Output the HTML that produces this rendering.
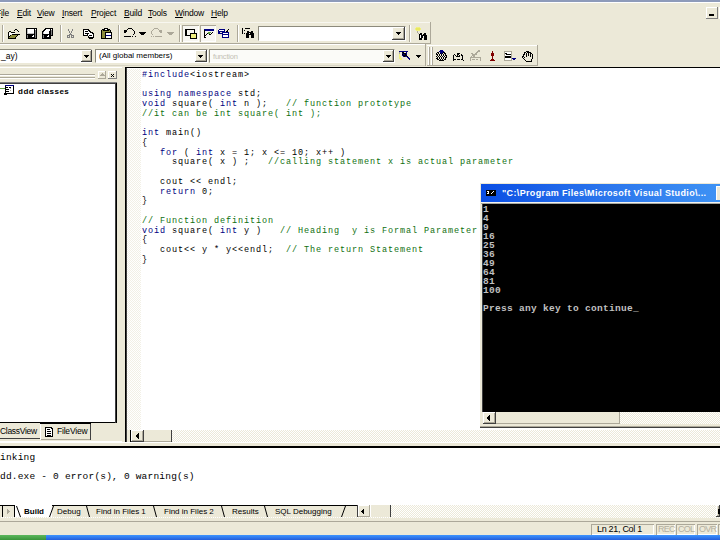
<!DOCTYPE html>
<html><head><meta charset="utf-8">
<style>
html,body{margin:0;padding:0;}
body{width:720px;height:540px;overflow:hidden;position:relative;background:#ece9d8;font-family:"Liberation Sans",sans-serif;}
.a{position:absolute;}
.dith{background-color:#ece9d8;background-image:linear-gradient(45deg,#fff 25%,transparent 25%,transparent 75%,#fff 75%),linear-gradient(45deg,#fff 25%,transparent 25%,transparent 75%,#fff 75%);background-size:2px 2px;background-position:0 0,1px 1px;}
.menu{font-size:8.5px;letter-spacing:-0.2px;color:#000;top:8px;white-space:pre;}
.menu u{text-decoration:underline;}
.code{font-family:"Liberation Mono",monospace;font-size:8.5px;letter-spacing:0.9px;font-weight:normal;line-height:9.75px;white-space:pre;color:#000;}
.kw{color:#000080;}
.cm{color:#107010;}
.con{font-family:"Liberation Mono",monospace;font-size:9.5px;letter-spacing:0.3px;font-weight:bold;line-height:9px;white-space:pre;color:#c0c0c0;}
.sunk{background:#fff;border-top:1px solid #8c8a7c;border-left:1px solid #8c8a7c;border-right:1px solid #fff;border-bottom:1px solid #fff;box-sizing:border-box;}
.sunk2{background:#fff;box-shadow:inset 1px 1px 0 #808080,inset 2px 2px 0 #404040,inset -1px -1px 0 #fff,inset -2px -2px 0 #d4d0c8;box-sizing:border-box;}
.btn{background:#ece9d8;box-shadow:inset -1px -1px 0 #404040,inset 1px 1px 0 #fff,inset -2px -2px 0 #aca899;box-sizing:border-box;}
.sepv{width:1px;background:#aca899;box-shadow:1px 0 0 #fff;}
.tab{font-size:8px;color:#000;white-space:pre;}
.stat{font-size:9.5px;white-space:pre;}
</style></head><body>
<!-- top strip -->
<div class="a" style="left:0;top:0;width:720px;height:2px;background:#8e9bba"></div>
<div class="a" style="left:0;top:2px;width:720px;height:1px;background:#fff"></div>
<!-- menu -->
<div class="a menu" style="left:-4px">F<u>i</u>le</div>
<div class="a menu" style="left:17px"><u>E</u>dit</div>
<div class="a menu" style="left:37px"><u>V</u>iew</div>
<div class="a menu" style="left:62px"><u>I</u>nsert</div>
<div class="a menu" style="left:91px"><u>P</u>roject</div>
<div class="a menu" style="left:124px"><u>B</u>uild</div>
<div class="a menu" style="left:148px"><u>T</u>ools</div>
<div class="a menu" style="left:175px"><u>W</u>indow</div>
<div class="a menu" style="left:211px"><u>H</u>elp</div>
<!-- MDI min button -->
<div class="a" style="left:706px;top:7px;width:12px;height:12px;box-shadow:inset -1px -1px 0 #808080,inset 1px 1px 0 #fff"></div>
<div class="a" style="left:709px;top:14px;width:5px;height:2px;background:#000"></div>
<div class="a" style="left:719px;top:7px;width:1px;height:12px;background:#fff"></div>

<!-- toolbar 1 -->
<div class="a" style="left:0;top:22px;width:430px;height:1px;background:#f8f7f0"></div>
<div class="a" style="left:0;top:43px;width:430px;height:1px;background:#aca899"></div>
<div class="a" style="left:430px;top:22px;width:1px;height:22px;background:#aca899"></div>
<div class="a sepv" style="left:2px;top:25px;height:17px"></div>
<div class="a sepv" style="left:60px;top:25px;height:17px"></div>
<div class="a sepv" style="left:118px;top:25px;height:17px"></div>
<div class="a sepv" style="left:179px;top:25px;height:17px"></div>
<div class="a sepv" style="left:237px;top:25px;height:17px"></div>
<div class="a sepv" style="left:409px;top:25px;height:17px"></div>
<!-- pressed buttons -->
<div class="a" style="left:182px;top:25px;width:17px;height:17px;background:#f7f6f1;box-shadow:inset 1px 1px 0 #aca899,inset -1px -1px 0 #fff"></div>
<div class="a" style="left:200px;top:25px;width:16px;height:17px;background:#f7f6f1;box-shadow:inset 1px 1px 0 #aca899,inset -1px -1px 0 #fff"></div>
<!-- find combo -->
<div class="a sunk" style="left:258px;top:26px;width:148px;height:15px"></div>
<div class="a btn" style="left:392px;top:27px;width:13px;height:13px"></div>

<!-- toolbar 2 -->
<div class="a" style="left:0;top:44px;width:425px;height:1px;background:#fff"></div>
<div class="a" style="left:0;top:65px;width:425px;height:1px;background:#d8d4c4"></div>
<div class="a" style="left:425px;top:44px;width:1px;height:22px;background:#aca899"></div>
<div class="a sunk" style="left:-2px;top:49px;width:94px;height:14px"></div>
<div class="a btn" style="left:81px;top:50px;width:11px;height:12px"></div>
<div class="a" style="left:1px;top:51px;font-size:8.5px;white-space:pre">_ay)</div>
<div class="a sunk" style="left:95px;top:49px;width:113px;height:14px"></div>
<div class="a btn" style="left:195px;top:50px;width:12px;height:12px"></div>
<div class="a" style="left:99px;top:51px;font-size:8px;white-space:pre">(All global members)</div>
<div class="a sunk" style="left:209px;top:49px;width:186px;height:14px;background:#fbfbf8"></div>
<div class="a btn" style="left:383px;top:50px;width:11px;height:12px"></div>
<div class="a" style="left:213px;top:51.5px;font-size:7.5px;letter-spacing:-0.2px;color:#c4c1b4;white-space:pre">function</div>
<!-- toolbar 3 -->
<div class="a" style="left:427px;top:45px;width:110px;height:1px;background:#fff"></div>
<div class="a" style="left:427px;top:65px;width:110px;height:1px;background:#aca899"></div>
<div class="a" style="left:537px;top:45px;width:1px;height:21px;background:#aca899"></div>
<div class="a" style="left:428px;top:47px;width:1px;height:18px;background:#fff;box-shadow:1px 0 0 #aca899"></div>
<div class="a" style="left:431px;top:47px;width:1px;height:18px;background:#fff;box-shadow:1px 0 0 #aca899"></div>


<!-- left pane -->
<div class="a" style="left:0;top:67px;width:122px;height:1px;background:#fff"></div>
<div class="a" style="left:0;top:74px;width:95px;height:1px;background:#aca899;box-shadow:0 1px 0 #fff"></div>
<div class="a" style="left:0;top:77px;width:95px;height:1px;background:#aca899;box-shadow:0 1px 0 #fff"></div>
<div class="a" style="left:98px;top:71px;width:8px;height:8px;box-shadow:inset -1px -1px 0 #aca899,inset 1px 1px 0 #fff"></div>
<div class="a" style="left:108px;top:71px;width:9px;height:8px;box-shadow:inset -1px -1px 0 #808080,inset 1px 1px 0 #fff"></div>
<div class="a" style="left:0;top:82px;width:117px;height:341px;background:#fff;box-shadow:inset 0 1px 0 #808080,inset -1px 0 0 #000,inset -2px 0 0 #404040,inset 0 -1px 0 #000,inset 0 2px 0 #404040"></div>
<div class="a" style="left:18px;top:86.5px;font-size:8px;font-weight:bold;letter-spacing:0.5px;white-space:pre">ddd classes</div>
<!-- left tabs -->
<div class="a" style="left:0;top:423px;width:40px;height:16px;box-shadow:inset 0 -1px 0 #404040"></div>
<div class="a tab" style="left:0;top:426px;font-size:8.5px;letter-spacing:-0.3px">ClassView</div>
<div class="a" style="left:40px;top:423px;width:51px;height:17px;background:#ece9d8;box-shadow:inset 0 1px 0 #000,inset -1px 0 0 #404040,inset 1px 0 0 #fff,inset 0 -1px 0 #aca899"></div>
<div class="a tab" style="left:57px;top:426px;font-size:8.5px;letter-spacing:-0.2px">FileView</div>
<div class="a" style="left:0;top:441px;width:122px;height:1px;background:#fff"></div>

<!-- editor -->
<div class="a" style="left:125px;top:67px;width:595px;height:375px;background:#fff;box-shadow:inset 1px 1px 0 #000,inset 2px 0 0 #404040"></div>
<div class="a dith" style="left:127px;top:69px;width:14px;height:361px;background-color:#f2f0e6"></div>
<div class="a dith" style="left:127px;top:430px;width:593px;height:12px"></div>
<div class="a" style="left:127px;top:430px;width:3px;height:12px;background:#ece9d8"></div>
<div class="a" style="left:130px;top:430px;width:1px;height:12px;background:#000"></div>
<div class="a btn" style="left:131px;top:430px;width:13px;height:12px"></div>
<div class="a" style="left:144px;top:430px;width:28px;height:12px;background:#ece9d8;box-shadow:inset -1px 0 0 #404040,inset 0 -1px 0 #aca899"></div>
<div class="a" style="left:0;top:442px;width:720px;height:1px;background:#fff"></div>

<div class="a code" style="left:142px;top:70.5px"><span class="kw">#include</span>&lt;iostream&gt;

<span class="kw">using namespace</span> std;
<span class="kw">void</span> square( <span class="kw">int</span> n );   <span class="cm">// function prototype</span>
<span class="cm">//it can be int square( int );</span>

<span class="kw">int</span> main()
{
   <span class="kw">for</span> ( <span class="kw">int</span> x = 1; x &lt;= 10; x++ )
     square( x ) ;   <span class="cm">//calling statement x is actual parameter</span>

   cout &lt;&lt; endl;
   <span class="kw">return</span> 0;
}

<span class="cm">// Function definition</span>
<span class="kw">void</span> square( <span class="kw">int</span> y )   <span class="cm">// Heading  y is Formal Parameter</span>
{
   cout&lt;&lt; y * y&lt;&lt;endl;  <span class="cm">// The return Statement</span>
}
</div>

<!-- console window -->
<div class="a" style="left:479px;top:182px;width:241px;height:246px;background:#ece9d8;box-shadow:inset 1px 1px 0 #fff,inset 0 -1px 0 #404040,inset 0 -2px 0 #aca899"></div>
<div class="a" style="left:481px;top:184px;width:239px;height:18px;background:linear-gradient(90deg,#0a4ee4 0%,#2a74ec 50%,#3e92f4 100%)"></div>
<div class="a" style="left:481px;top:202px;width:239px;height:1px;background:#f4f4f0"></div>
<div class="a" style="left:481px;top:203px;width:239px;height:1px;background:#a8a8a0"></div>
<div class="a" style="left:482px;top:204px;width:238px;height:208px;background:#000;box-shadow:inset 1px 0 0 #404040"></div>
<div class="a" style="left:502px;top:188px;font-size:9px;letter-spacing:0.35px;font-weight:bold;color:#fff;white-space:pre">"C:\Program Files\Microsoft Visual Studio\...</div>
<div class="a" style="left:716px;top:186px;width:4px;height:14px;background:#ece9d8;box-shadow:inset 1px 1px 0 #fff"></div>
<div class="a con" style="left:483px;top:205px">1
4
9
16
25
36
49
64
81
100

Press any key to continue_</div>
<div class="a dith" style="left:483px;top:412px;width:237px;height:12px"></div>
<div class="a btn" style="left:483px;top:412px;width:13px;height:12px"></div>
<div class="a" style="left:496px;top:412px;width:124px;height:12px;background:#ece9d8;box-shadow:inset -1px -1px 0 #aca899"></div>

<!-- output pane -->
<div class="a" style="left:0;top:446px;width:720px;height:2px;background:#000"></div>
<div class="a" style="left:0;top:448px;width:720px;height:57px;background:#fff"></div>
<div class="a code" style="left:0;top:453px;color:#000;font-weight:normal;font-size:9.5px;letter-spacing:0.2px;line-height:9.5px">inking

dd.exe - 0 error(s), 0 warning(s)</div>
<div class="a dith" style="left:0;top:505px;width:720px;height:13px"></div>
<div class="a" style="left:0;top:518px;width:720px;height:3px;background:#ece9d8"></div>
<div class="a" style="left:0;top:521px;width:720px;height:1px;background:#aca899"></div>

<!-- output tabs -->
<div class="a" style="left:15px;top:505px;width:343px;height:12px;background:#ece9d8;box-shadow:inset 0 1px 0 #000"></div>
<div class="a" style="left:15px;top:505px;width:37px;height:12px;background:#fff"></div>
<div class="a" style="left:0;top:505px;width:15px;height:12px;background:#ece9d8;box-shadow:inset 0 1px 0 #000"></div>
<div class="a" style="left:2px;top:505px;width:1px;height:12px;background:#000"></div>
<div class="a" style="left:14px;top:505px;width:1px;height:12px;background:#000"></div>
<svg class="a" style="left:0;top:0" width="720" height="540">
<g stroke="#000" stroke-width="1" fill="none">
<path d="M16.5 506 L20.5 517"/>
<path d="M53.5 506 L49.5 517"/>
<path d="M86.5 506 L89.5 517"/>
<path d="M153.5 506 L156.5 517"/>
<path d="M221.5 506 L224.5 517"/>
<path d="M264.5 506 L267.5 517"/>
<path d="M345.5 506 L341.5 517"/>
</g>
</svg>
<div class="a" style="left:357px;top:505px;width:1px;height:12px;background:#404040"></div>
<div class="a" style="left:358px;top:505px;width:12px;height:12px;background:#ece9d8;box-shadow:inset -1px -1px 0 #aca899,inset 1px 1px 0 #fff"></div>
<div class="a" style="left:370px;top:505px;width:21px;height:12px;background:#ece9d8;box-shadow:inset -1px 0 0 #404040,inset 1px 0 0 #fff"></div>
<div class="a btn" style="left:716px;top:505px;width:4px;height:12px"></div>
<div class="a tab" style="left:24px;top:507px;font-weight:bold">Build</div>
<div class="a tab" style="left:57px;top:507px">Debug</div>
<div class="a tab" style="left:96px;top:507px">Find in Files 1</div>
<div class="a tab" style="left:164px;top:507px">Find in Files 2</div>
<div class="a tab" style="left:232px;top:507px">Results</div>
<div class="a tab" style="left:275px;top:507px">SQL Debugging</div>

<!-- status -->
<div class="a" style="left:591px;top:524px;width:63px;height:11px;box-shadow:inset 1px 1px 0 #aca899,inset -1px -1px 0 #fff"></div>
<div class="a stat" style="left:597px;top:524px;font-size:9px;letter-spacing:-0.3px">Ln 21, Col 1</div>
<div class="a" style="left:656px;top:524px;width:19px;height:11px;box-shadow:inset 1px 1px 0 #aca899,inset -1px -1px 0 #fff"></div>
<div class="a stat" style="left:658px;top:524px;font-size:9px;letter-spacing:-0.7px;color:#b4b0a0">REC</div>
<div class="a" style="left:676px;top:524px;width:19px;height:11px;box-shadow:inset 1px 1px 0 #aca899,inset -1px -1px 0 #fff"></div>
<div class="a stat" style="left:678px;top:524px;font-size:9px;letter-spacing:-0.7px;color:#b4b0a0">COL</div>
<div class="a" style="left:697px;top:524px;width:20px;height:11px;box-shadow:inset 1px 1px 0 #aca899,inset -1px -1px 0 #fff"></div>
<div class="a stat" style="left:699px;top:524px;font-size:9px;letter-spacing:-0.7px;color:#b4b0a0">OVR</div>
<div class="a" style="left:718px;top:524px;width:2px;height:11px;box-shadow:inset 1px 1px 0 #aca899"></div>
<!-- taskbar -->
<div class="a" style="left:0;top:535px;width:720px;height:5px;background:linear-gradient(180deg,#3d95ff,#245edb)"></div>
<div class="a" style="left:0;top:535px;width:46px;height:5px;background:linear-gradient(180deg,#5cb85c,#3a943a)"></div>






<!--ICONS-->
<svg class="a" style="left:0;top:0" width="720" height="540" shape-rendering="crispEdges">
<rect x="15" y="29" width="2" height="1" fill="#000000"/>
<rect x="14" y="30" width="1" height="1" fill="#000000"/>
<rect x="17" y="30" width="1" height="1" fill="#000000"/>
<rect x="9" y="31" width="2" height="1" fill="#000000"/>
<rect x="18" y="31" width="1" height="1" fill="#000000"/>
<rect x="8" y="32" width="1" height="1" fill="#000000"/>
<rect x="11" y="32" width="4" height="1" fill="#000000"/>
<rect x="8" y="33" width="1" height="1" fill="#000000"/>
<rect x="9" y="33" width="6" height="1" fill="#ffffff"/>
<rect x="8" y="34" width="1" height="1" fill="#000000"/>
<rect x="9" y="34" width="2" height="1" fill="#ffffff"/>
<rect x="12" y="34" width="8" height="1" fill="#000000"/>
<rect x="8" y="35" width="1" height="1" fill="#000000"/>
<rect x="9" y="35" width="1" height="1" fill="#ffffff"/>
<rect x="10" y="35" width="1" height="1" fill="#000000"/>
<rect x="11" y="35" width="6" height="1" fill="#8c8c3c"/>
<rect x="17" y="35" width="1" height="1" fill="#000000"/>
<rect x="8" y="36" width="2" height="1" fill="#000000"/>
<rect x="10" y="36" width="6" height="1" fill="#8c8c3c"/>
<rect x="16" y="36" width="1" height="1" fill="#000000"/>
<rect x="8" y="37" width="1" height="1" fill="#000000"/>
<rect x="9" y="37" width="6" height="1" fill="#8c8c3c"/>
<rect x="15" y="37" width="1" height="1" fill="#000000"/>
<rect x="8" y="38" width="8" height="1" fill="#000000"/>
<rect x="26" y="28" width="11" height="1" fill="#000000"/>
<rect x="26" y="29" width="1" height="1" fill="#000000"/>
<rect x="27" y="29" width="1" height="1" fill="#c0c0c0"/>
<rect x="28" y="29" width="6" height="1" fill="#ffffff"/>
<rect x="34" y="29" width="1" height="1" fill="#000000"/>
<rect x="35" y="29" width="1" height="1" fill="#ffffff"/>
<rect x="36" y="29" width="1" height="1" fill="#000000"/>
<rect x="26" y="30" width="1" height="1" fill="#000000"/>
<rect x="27" y="30" width="1" height="1" fill="#c0c0c0"/>
<rect x="28" y="30" width="6" height="1" fill="#ffffff"/>
<rect x="34" y="30" width="1" height="1" fill="#000000"/>
<rect x="35" y="30" width="1" height="1" fill="#808080"/>
<rect x="36" y="30" width="1" height="1" fill="#000000"/>
<rect x="26" y="31" width="1" height="1" fill="#000000"/>
<rect x="27" y="31" width="1" height="1" fill="#c0c0c0"/>
<rect x="28" y="31" width="6" height="1" fill="#ffffff"/>
<rect x="34" y="31" width="1" height="1" fill="#000000"/>
<rect x="35" y="31" width="1" height="1" fill="#808080"/>
<rect x="36" y="31" width="1" height="1" fill="#000000"/>
<rect x="26" y="32" width="1" height="1" fill="#000000"/>
<rect x="27" y="32" width="1" height="1" fill="#c0c0c0"/>
<rect x="28" y="32" width="6" height="1" fill="#ffffff"/>
<rect x="34" y="32" width="1" height="1" fill="#000000"/>
<rect x="35" y="32" width="1" height="1" fill="#808080"/>
<rect x="36" y="32" width="1" height="1" fill="#000000"/>
<rect x="26" y="33" width="1" height="1" fill="#000000"/>
<rect x="27" y="33" width="7" height="1" fill="#c0c0c0"/>
<rect x="34" y="33" width="1" height="1" fill="#000000"/>
<rect x="35" y="33" width="1" height="1" fill="#808080"/>
<rect x="36" y="33" width="1" height="1" fill="#000000"/>
<rect x="26" y="34" width="9" height="1" fill="#000000"/>
<rect x="35" y="34" width="1" height="1" fill="#808080"/>
<rect x="36" y="34" width="1" height="1" fill="#000000"/>
<rect x="26" y="35" width="1" height="1" fill="#000000"/>
<rect x="27" y="35" width="1" height="1" fill="#808080"/>
<rect x="28" y="35" width="5" height="1" fill="#000000"/>
<rect x="33" y="35" width="1" height="1" fill="#ffffff"/>
<rect x="34" y="35" width="1" height="1" fill="#000000"/>
<rect x="35" y="35" width="1" height="1" fill="#808080"/>
<rect x="36" y="35" width="1" height="1" fill="#000000"/>
<rect x="26" y="36" width="1" height="1" fill="#000000"/>
<rect x="27" y="36" width="1" height="1" fill="#808080"/>
<rect x="28" y="36" width="4" height="1" fill="#000000"/>
<rect x="32" y="36" width="2" height="1" fill="#ffffff"/>
<rect x="34" y="36" width="1" height="1" fill="#000000"/>
<rect x="35" y="36" width="1" height="1" fill="#808080"/>
<rect x="36" y="36" width="1" height="1" fill="#000000"/>
<rect x="26" y="37" width="1" height="1" fill="#000000"/>
<rect x="27" y="37" width="1" height="1" fill="#808080"/>
<rect x="28" y="37" width="7" height="1" fill="#000000"/>
<rect x="35" y="37" width="1" height="1" fill="#808080"/>
<rect x="36" y="37" width="1" height="1" fill="#000000"/>
<rect x="26" y="38" width="11" height="1" fill="#000000"/>
<rect x="45" y="28" width="8" height="1" fill="#000000"/>
<rect x="44" y="29" width="2" height="1" fill="#000000"/>
<rect x="46" y="29" width="4" height="1" fill="#ffffff"/>
<rect x="50" y="29" width="1" height="1" fill="#000000"/>
<rect x="51" y="29" width="1" height="1" fill="#ffffff"/>
<rect x="52" y="29" width="1" height="1" fill="#000000"/>
<rect x="43" y="30" width="2" height="1" fill="#000000"/>
<rect x="45" y="30" width="5" height="1" fill="#ffffff"/>
<rect x="50" y="30" width="1" height="1" fill="#000000"/>
<rect x="51" y="30" width="1" height="1" fill="#808080"/>
<rect x="52" y="30" width="1" height="1" fill="#000000"/>
<rect x="42" y="31" width="2" height="1" fill="#000000"/>
<rect x="44" y="31" width="5" height="1" fill="#ffffff"/>
<rect x="49" y="31" width="2" height="1" fill="#000000"/>
<rect x="51" y="31" width="1" height="1" fill="#808080"/>
<rect x="52" y="31" width="1" height="1" fill="#000000"/>
<rect x="42" y="32" width="1" height="1" fill="#000000"/>
<rect x="43" y="32" width="1" height="1" fill="#c0c0c0"/>
<rect x="44" y="32" width="5" height="1" fill="#ffffff"/>
<rect x="49" y="32" width="2" height="1" fill="#000000"/>
<rect x="51" y="32" width="1" height="1" fill="#808080"/>
<rect x="52" y="32" width="1" height="1" fill="#000000"/>
<rect x="42" y="33" width="1" height="1" fill="#000000"/>
<rect x="43" y="33" width="1" height="1" fill="#c0c0c0"/>
<rect x="44" y="33" width="5" height="1" fill="#ffffff"/>
<rect x="49" y="33" width="2" height="1" fill="#000000"/>
<rect x="51" y="33" width="1" height="1" fill="#808080"/>
<rect x="52" y="33" width="1" height="1" fill="#000000"/>
<rect x="42" y="34" width="9" height="1" fill="#000000"/>
<rect x="51" y="34" width="1" height="1" fill="#808080"/>
<rect x="52" y="34" width="1" height="1" fill="#000000"/>
<rect x="42" y="35" width="1" height="1" fill="#000000"/>
<rect x="43" y="35" width="1" height="1" fill="#808080"/>
<rect x="44" y="35" width="4" height="1" fill="#000000"/>
<rect x="48" y="35" width="1" height="1" fill="#ffffff"/>
<rect x="49" y="35" width="4" height="1" fill="#000000"/>
<rect x="42" y="36" width="1" height="1" fill="#000000"/>
<rect x="43" y="36" width="1" height="1" fill="#808080"/>
<rect x="44" y="36" width="3" height="1" fill="#000000"/>
<rect x="47" y="36" width="2" height="1" fill="#ffffff"/>
<rect x="49" y="36" width="2" height="1" fill="#000000"/>
<rect x="42" y="37" width="1" height="1" fill="#000000"/>
<rect x="43" y="37" width="1" height="1" fill="#808080"/>
<rect x="44" y="37" width="7" height="1" fill="#000000"/>
<rect x="42" y="38" width="9" height="1" fill="#000000"/>
<rect x="68" y="29" width="1" height="1" fill="#808080"/>
<rect x="72" y="29" width="1" height="1" fill="#808080"/>
<rect x="68" y="30" width="1" height="1" fill="#808080"/>
<rect x="72" y="30" width="1" height="1" fill="#808080"/>
<rect x="69" y="31" width="1" height="1" fill="#808080"/>
<rect x="71" y="31" width="1" height="1" fill="#808080"/>
<rect x="69" y="32" width="1" height="1" fill="#808080"/>
<rect x="71" y="32" width="1" height="1" fill="#808080"/>
<rect x="70" y="33" width="1" height="1" fill="#808080"/>
<rect x="69" y="34" width="3" height="1" fill="#808080"/>
<rect x="67" y="35" width="3" height="1" fill="#808080"/>
<rect x="71" y="35" width="3" height="1" fill="#808080"/>
<rect x="67" y="36" width="1" height="1" fill="#808080"/>
<rect x="69" y="36" width="1" height="1" fill="#808080"/>
<rect x="71" y="36" width="1" height="1" fill="#808080"/>
<rect x="73" y="36" width="1" height="1" fill="#808080"/>
<rect x="67" y="37" width="3" height="1" fill="#808080"/>
<rect x="71" y="37" width="3" height="1" fill="#808080"/>
<rect x="83" y="29" width="6" height="1" fill="#000000"/>
<rect x="83" y="30" width="1" height="1" fill="#000000"/>
<rect x="84" y="30" width="4" height="1" fill="#ffffff"/>
<rect x="88" y="30" width="2" height="1" fill="#000000"/>
<rect x="83" y="31" width="1" height="1" fill="#000000"/>
<rect x="84" y="31" width="1" height="1" fill="#ffffff"/>
<rect x="85" y="31" width="3" height="1" fill="#000000"/>
<rect x="88" y="31" width="1" height="1" fill="#ffffff"/>
<rect x="89" y="31" width="2" height="1" fill="#000000"/>
<rect x="83" y="32" width="1" height="1" fill="#000000"/>
<rect x="84" y="32" width="6" height="1" fill="#ffffff"/>
<rect x="90" y="32" width="3" height="1" fill="#000000"/>
<rect x="83" y="33" width="1" height="1" fill="#000000"/>
<rect x="84" y="33" width="1" height="1" fill="#ffffff"/>
<rect x="85" y="33" width="4" height="1" fill="#000000"/>
<rect x="89" y="33" width="3" height="1" fill="#ffffff"/>
<rect x="92" y="33" width="2" height="1" fill="#000000"/>
<rect x="83" y="34" width="1" height="1" fill="#000000"/>
<rect x="84" y="34" width="3" height="1" fill="#ffffff"/>
<rect x="87" y="34" width="1" height="1" fill="#000000"/>
<rect x="88" y="34" width="5" height="1" fill="#ffffff"/>
<rect x="93" y="34" width="1" height="1" fill="#000000"/>
<rect x="83" y="35" width="5" height="1" fill="#000000"/>
<rect x="88" y="35" width="1" height="1" fill="#ffffff"/>
<rect x="89" y="35" width="3" height="1" fill="#000000"/>
<rect x="92" y="35" width="1" height="1" fill="#ffffff"/>
<rect x="93" y="35" width="1" height="1" fill="#000000"/>
<rect x="88" y="36" width="1" height="1" fill="#000000"/>
<rect x="89" y="36" width="4" height="1" fill="#ffffff"/>
<rect x="93" y="36" width="1" height="1" fill="#000000"/>
<rect x="88" y="37" width="6" height="1" fill="#000000"/>
<rect x="89" y="38" width="4" height="1" fill="#000000"/>
<rect x="104" y="28" width="4" height="1" fill="#000000"/>
<rect x="102" y="29" width="3" height="1" fill="#000000"/>
<rect x="105" y="29" width="2" height="1" fill="#ffffff"/>
<rect x="107" y="29" width="3" height="1" fill="#000000"/>
<rect x="101" y="30" width="1" height="1" fill="#000000"/>
<rect x="102" y="30" width="1" height="1" fill="#8c8c3c"/>
<rect x="103" y="30" width="6" height="1" fill="#000000"/>
<rect x="109" y="30" width="1" height="1" fill="#8c8c3c"/>
<rect x="110" y="30" width="1" height="1" fill="#000000"/>
<rect x="101" y="31" width="1" height="1" fill="#000000"/>
<rect x="102" y="31" width="8" height="1" fill="#8c8c3c"/>
<rect x="110" y="31" width="1" height="1" fill="#000000"/>
<rect x="101" y="32" width="1" height="1" fill="#000000"/>
<rect x="102" y="32" width="3" height="1" fill="#8c8c3c"/>
<rect x="105" y="32" width="7" height="1" fill="#000000"/>
<rect x="101" y="33" width="1" height="1" fill="#000000"/>
<rect x="102" y="33" width="3" height="1" fill="#8c8c3c"/>
<rect x="105" y="33" width="1" height="1" fill="#000000"/>
<rect x="106" y="33" width="5" height="1" fill="#ffffff"/>
<rect x="111" y="33" width="1" height="1" fill="#000000"/>
<rect x="101" y="34" width="1" height="1" fill="#000000"/>
<rect x="102" y="34" width="3" height="1" fill="#8c8c3c"/>
<rect x="105" y="34" width="1" height="1" fill="#000000"/>
<rect x="106" y="34" width="5" height="1" fill="#ffffff"/>
<rect x="111" y="34" width="1" height="1" fill="#000000"/>
<rect x="101" y="35" width="1" height="1" fill="#000000"/>
<rect x="102" y="35" width="3" height="1" fill="#8c8c3c"/>
<rect x="105" y="35" width="1" height="1" fill="#000000"/>
<rect x="106" y="35" width="5" height="1" fill="#000080"/>
<rect x="111" y="35" width="1" height="1" fill="#000000"/>
<rect x="101" y="36" width="1" height="1" fill="#000000"/>
<rect x="102" y="36" width="3" height="1" fill="#8c8c3c"/>
<rect x="105" y="36" width="1" height="1" fill="#000000"/>
<rect x="106" y="36" width="5" height="1" fill="#ffffff"/>
<rect x="111" y="36" width="1" height="1" fill="#000000"/>
<rect x="101" y="37" width="1" height="1" fill="#000000"/>
<rect x="102" y="37" width="3" height="1" fill="#8c8c3c"/>
<rect x="105" y="37" width="1" height="1" fill="#000000"/>
<rect x="106" y="37" width="5" height="1" fill="#ffffff"/>
<rect x="111" y="37" width="1" height="1" fill="#000000"/>
<rect x="101" y="38" width="11" height="1" fill="#000000"/>
<rect x="128" y="28" width="4" height="1" fill="#000000"/>
<rect x="127" y="29" width="1" height="1" fill="#000000"/>
<rect x="132" y="29" width="1" height="1" fill="#000000"/>
<rect x="124" y="30" width="3" height="1" fill="#000000"/>
<rect x="133" y="30" width="1" height="1" fill="#000000"/>
<rect x="124" y="31" width="3" height="1" fill="#000000"/>
<rect x="134" y="31" width="1" height="1" fill="#000000"/>
<rect x="124" y="32" width="2" height="1" fill="#000000"/>
<rect x="134" y="32" width="1" height="1" fill="#000000"/>
<rect x="134" y="33" width="1" height="1" fill="#000000"/>
<rect x="133" y="34" width="1" height="1" fill="#000000"/>
<rect x="124" y="36" width="7" height="1" fill="#000000"/>
<rect x="132" y="36" width="1" height="1" fill="#000000"/>
<rect x="135" y="36" width="1" height="1" fill="#000000"/>
<rect x="139" y="32" width="7" height="1" fill="#000000"/>
<rect x="140" y="33" width="5" height="1" fill="#000000"/>
<rect x="141" y="34" width="3" height="1" fill="#000000"/>
<rect x="154" y="28" width="4" height="1" fill="#aca899"/>
<rect x="153" y="29" width="1" height="1" fill="#aca899"/>
<rect x="158" y="29" width="1" height="1" fill="#aca899"/>
<rect x="152" y="30" width="1" height="1" fill="#aca899"/>
<rect x="159" y="30" width="3" height="1" fill="#aca899"/>
<rect x="151" y="31" width="1" height="1" fill="#aca899"/>
<rect x="159" y="31" width="3" height="1" fill="#aca899"/>
<rect x="151" y="32" width="1" height="1" fill="#aca899"/>
<rect x="160" y="32" width="2" height="1" fill="#aca899"/>
<rect x="151" y="33" width="1" height="1" fill="#aca899"/>
<rect x="152" y="34" width="1" height="1" fill="#aca899"/>
<rect x="151" y="36" width="1" height="1" fill="#aca899"/>
<rect x="153" y="36" width="1" height="1" fill="#aca899"/>
<rect x="155" y="36" width="7" height="1" fill="#aca899"/>
<rect x="167" y="32" width="7" height="1" fill="#aca899"/>
<rect x="168" y="33" width="5" height="1" fill="#aca899"/>
<rect x="169" y="34" width="3" height="1" fill="#aca899"/>
<rect x="185" y="29" width="10" height="1" fill="#000000"/>
<rect x="185" y="30" width="2" height="1" fill="#000000"/>
<rect x="194" y="30" width="1" height="1" fill="#000000"/>
<rect x="185" y="31" width="2" height="1" fill="#000000"/>
<rect x="194" y="31" width="1" height="1" fill="#000000"/>
<rect x="185" y="32" width="2" height="1" fill="#000000"/>
<rect x="194" y="32" width="1" height="1" fill="#000000"/>
<rect x="185" y="33" width="2" height="1" fill="#000000"/>
<rect x="190" y="33" width="7" height="1" fill="#000000"/>
<rect x="185" y="34" width="2" height="1" fill="#000000"/>
<rect x="190" y="34" width="1" height="1" fill="#000000"/>
<rect x="191" y="34" width="5" height="1" fill="#f0f080"/>
<rect x="196" y="34" width="1" height="1" fill="#000000"/>
<rect x="185" y="35" width="6" height="1" fill="#000000"/>
<rect x="191" y="35" width="5" height="1" fill="#f0f080"/>
<rect x="196" y="35" width="1" height="1" fill="#000000"/>
<rect x="190" y="36" width="1" height="1" fill="#000000"/>
<rect x="191" y="36" width="5" height="1" fill="#f0f080"/>
<rect x="196" y="36" width="1" height="1" fill="#000000"/>
<rect x="190" y="37" width="1" height="1" fill="#000000"/>
<rect x="191" y="37" width="5" height="1" fill="#f0f080"/>
<rect x="196" y="37" width="1" height="1" fill="#000000"/>
<rect x="190" y="38" width="7" height="1" fill="#000000"/>
<rect x="204" y="29" width="10" height="1" fill="#000080"/>
<rect x="204" y="30" width="1" height="1" fill="#000000"/>
<rect x="205" y="30" width="9" height="1" fill="#000080"/>
<rect x="204" y="31" width="1" height="1" fill="#000000"/>
<rect x="204" y="32" width="1" height="1" fill="#000000"/>
<rect x="208" y="32" width="3" height="1" fill="#60a040"/>
<rect x="212" y="32" width="1" height="1" fill="#000000"/>
<rect x="204" y="33" width="1" height="1" fill="#000000"/>
<rect x="207" y="33" width="1" height="1" fill="#000000"/>
<rect x="208" y="33" width="2" height="1" fill="#60a040"/>
<rect x="211" y="33" width="1" height="1" fill="#000000"/>
<rect x="204" y="34" width="1" height="1" fill="#000000"/>
<rect x="206" y="34" width="1" height="1" fill="#000000"/>
<rect x="209" y="34" width="2" height="1" fill="#000000"/>
<rect x="204" y="35" width="2" height="1" fill="#000000"/>
<rect x="204" y="36" width="1" height="1" fill="#000000"/>
<rect x="204" y="37" width="2" height="1" fill="#000000"/>
<rect x="219" y="29" width="6" height="1" fill="#000080"/>
<rect x="228" y="29" width="1" height="1" fill="#000000"/>
<rect x="218" y="30" width="1" height="1" fill="#000080"/>
<rect x="219" y="30" width="5" height="1" fill="#ffffff"/>
<rect x="224" y="30" width="1" height="1" fill="#000080"/>
<rect x="227" y="30" width="1" height="1" fill="#000000"/>
<rect x="218" y="31" width="7" height="1" fill="#000080"/>
<rect x="226" y="31" width="2" height="1" fill="#000000"/>
<rect x="218" y="32" width="2" height="1" fill="#000080"/>
<rect x="222" y="32" width="7" height="1" fill="#000080"/>
<rect x="218" y="33" width="5" height="1" fill="#000080"/>
<rect x="223" y="33" width="5" height="1" fill="#ffffff"/>
<rect x="228" y="33" width="1" height="1" fill="#000080"/>
<rect x="222" y="34" width="7" height="1" fill="#000080"/>
<rect x="222" y="35" width="1" height="1" fill="#000080"/>
<rect x="223" y="35" width="5" height="1" fill="#ffffff"/>
<rect x="228" y="35" width="1" height="1" fill="#000080"/>
<rect x="222" y="36" width="1" height="1" fill="#000080"/>
<rect x="223" y="36" width="5" height="1" fill="#ffffff"/>
<rect x="228" y="36" width="1" height="1" fill="#000080"/>
<rect x="222" y="37" width="7" height="1" fill="#000080"/>
<rect x="242" y="28" width="1" height="1" fill="#000000"/>
<rect x="245" y="28" width="5" height="1" fill="#000000"/>
<rect x="242" y="29" width="1" height="1" fill="#000000"/>
<rect x="242" y="30" width="1" height="1" fill="#000000"/>
<rect x="244" y="30" width="1" height="1" fill="#000000"/>
<rect x="242" y="31" width="1" height="1" fill="#000000"/>
<rect x="247" y="31" width="2" height="1" fill="#000000"/>
<rect x="251" y="31" width="2" height="1" fill="#000000"/>
<rect x="242" y="32" width="1" height="1" fill="#000000"/>
<rect x="247" y="32" width="6" height="1" fill="#000000"/>
<rect x="242" y="33" width="1" height="1" fill="#000000"/>
<rect x="244" y="33" width="1" height="1" fill="#000000"/>
<rect x="246" y="33" width="3" height="1" fill="#000000"/>
<rect x="249" y="33" width="1" height="1" fill="#ffffff"/>
<rect x="250" y="33" width="4" height="1" fill="#000000"/>
<rect x="246" y="34" width="8" height="1" fill="#000000"/>
<rect x="246" y="35" width="3" height="1" fill="#000000"/>
<rect x="251" y="35" width="3" height="1" fill="#000000"/>
<rect x="246" y="36" width="3" height="1" fill="#000000"/>
<rect x="251" y="36" width="3" height="1" fill="#000000"/>
<rect x="246" y="37" width="3" height="1" fill="#000000"/>
<rect x="251" y="37" width="3" height="1" fill="#000000"/>
<rect x="416" y="27" width="4" height="1" fill="#f0f080"/>
<rect x="415" y="28" width="1" height="1" fill="#f0f080"/>
<rect x="416" y="28" width="4" height="1" fill="#e8e860"/>
<rect x="420" y="28" width="1" height="1" fill="#f0f080"/>
<rect x="415" y="29" width="1" height="1" fill="#f0f080"/>
<rect x="416" y="29" width="4" height="1" fill="#e8e860"/>
<rect x="420" y="29" width="1" height="1" fill="#f0f080"/>
<rect x="416" y="30" width="4" height="1" fill="#f0f080"/>
<rect x="417" y="31" width="1" height="1" fill="#aca899"/>
<rect x="417" y="32" width="1" height="1" fill="#aca899"/>
<rect x="418" y="33" width="1" height="1" fill="#aca899"/>
<rect x="420" y="33" width="2" height="1" fill="#000000"/>
<rect x="424" y="33" width="2" height="1" fill="#000000"/>
<rect x="419" y="34" width="3" height="1" fill="#000000"/>
<rect x="423" y="34" width="3" height="1" fill="#000000"/>
<rect x="419" y="35" width="1" height="1" fill="#000000"/>
<rect x="420" y="35" width="1" height="1" fill="#ffffff"/>
<rect x="421" y="35" width="6" height="1" fill="#000000"/>
<rect x="419" y="36" width="1" height="1" fill="#000000"/>
<rect x="420" y="36" width="1" height="1" fill="#ffffff"/>
<rect x="421" y="36" width="2" height="1" fill="#000000"/>
<rect x="423" y="36" width="1" height="1" fill="#ffffff"/>
<rect x="424" y="36" width="3" height="1" fill="#000000"/>
<rect x="419" y="37" width="1" height="1" fill="#000000"/>
<rect x="420" y="37" width="1" height="1" fill="#ffffff"/>
<rect x="421" y="37" width="2" height="1" fill="#000000"/>
<rect x="424" y="37" width="3" height="1" fill="#000000"/>
<rect x="419" y="38" width="3" height="1" fill="#000000"/>
<rect x="424" y="38" width="3" height="1" fill="#000000"/>
<rect x="419" y="39" width="3" height="1" fill="#000000"/>
<rect x="424" y="39" width="3" height="1" fill="#000000"/>
<rect x="396" y="32" width="5" height="1" fill="#000000"/>
<rect x="397" y="33" width="3" height="1" fill="#000000"/>
<rect x="398" y="34" width="1" height="1" fill="#000000"/>
<rect x="84" y="55" width="5" height="1" fill="#000000"/>
<rect x="85" y="56" width="3" height="1" fill="#000000"/>
<rect x="86" y="57" width="1" height="1" fill="#000000"/>
<rect x="198" y="55" width="5" height="1" fill="#000000"/>
<rect x="199" y="56" width="3" height="1" fill="#000000"/>
<rect x="200" y="57" width="1" height="1" fill="#000000"/>
<rect x="386" y="55" width="5" height="1" fill="#000000"/>
<rect x="387" y="56" width="3" height="1" fill="#000000"/>
<rect x="388" y="57" width="1" height="1" fill="#000000"/>
<rect x="416" y="55" width="5" height="1" fill="#000000"/>
<rect x="417" y="56" width="3" height="1" fill="#000000"/>
<rect x="418" y="57" width="1" height="1" fill="#000000"/>
<rect x="399" y="51" width="9" height="1" fill="#000080"/>
<rect x="399" y="52" width="1" height="1" fill="#aca899"/>
<rect x="402" y="52" width="2" height="1" fill="#000000"/>
<rect x="406" y="52" width="1" height="1" fill="#000080"/>
<rect x="399" y="53" width="1" height="1" fill="#aca899"/>
<rect x="402" y="53" width="1" height="1" fill="#000080"/>
<rect x="403" y="53" width="3" height="1" fill="#000000"/>
<rect x="406" y="53" width="1" height="1" fill="#000080"/>
<rect x="399" y="54" width="1" height="1" fill="#f0f080"/>
<rect x="402" y="54" width="1" height="1" fill="#000000"/>
<rect x="403" y="54" width="2" height="1" fill="#000080"/>
<rect x="405" y="54" width="1" height="1" fill="#000000"/>
<rect x="406" y="54" width="1" height="1" fill="#000080"/>
<rect x="399" y="55" width="1" height="1" fill="#f0f080"/>
<rect x="402" y="55" width="1" height="1" fill="#000080"/>
<rect x="403" y="55" width="4" height="1" fill="#000000"/>
<rect x="399" y="56" width="2" height="1" fill="#f0f080"/>
<rect x="403" y="56" width="1" height="1" fill="#000080"/>
<rect x="404" y="56" width="1" height="1" fill="#000000"/>
<rect x="405" y="56" width="2" height="1" fill="#000080"/>
<rect x="407" y="56" width="1" height="1" fill="#000000"/>
<rect x="399" y="57" width="2" height="1" fill="#f0f080"/>
<rect x="407" y="57" width="2" height="1" fill="#000080"/>
<rect x="399" y="58" width="3" height="1" fill="#f0f080"/>
<rect x="408" y="58" width="2" height="1" fill="#000080"/>
<rect x="400" y="59" width="2" height="1" fill="#f0f080"/>
<rect x="409" y="59" width="1" height="1" fill="#000080"/>
<rect x="440" y="50" width="3" height="1" fill="#000080"/>
<rect x="439" y="51" width="5" height="1" fill="#000080"/>
<rect x="437" y="52" width="2" height="1" fill="#000000"/>
<rect x="440" y="52" width="3" height="1" fill="#000080"/>
<rect x="443" y="52" width="2" height="1" fill="#000000"/>
<rect x="436" y="53" width="1" height="1" fill="#000000"/>
<rect x="438" y="53" width="1" height="1" fill="#000000"/>
<rect x="440" y="53" width="1" height="1" fill="#000000"/>
<rect x="441" y="53" width="1" height="1" fill="#000080"/>
<rect x="442" y="53" width="1" height="1" fill="#000000"/>
<rect x="444" y="53" width="2" height="1" fill="#000000"/>
<rect x="436" y="54" width="2" height="1" fill="#000000"/>
<rect x="439" y="54" width="1" height="1" fill="#000000"/>
<rect x="441" y="54" width="1" height="1" fill="#000000"/>
<rect x="443" y="54" width="1" height="1" fill="#000000"/>
<rect x="445" y="54" width="1" height="1" fill="#000000"/>
<rect x="437" y="55" width="1" height="1" fill="#000000"/>
<rect x="439" y="55" width="1" height="1" fill="#000000"/>
<rect x="441" y="55" width="1" height="1" fill="#000000"/>
<rect x="443" y="55" width="1" height="1" fill="#000000"/>
<rect x="445" y="55" width="2" height="1" fill="#000000"/>
<rect x="436" y="56" width="1" height="1" fill="#000000"/>
<rect x="438" y="56" width="1" height="1" fill="#000000"/>
<rect x="440" y="56" width="1" height="1" fill="#000000"/>
<rect x="442" y="56" width="1" height="1" fill="#000000"/>
<rect x="444" y="56" width="1" height="1" fill="#000000"/>
<rect x="446" y="56" width="1" height="1" fill="#000000"/>
<rect x="437" y="57" width="1" height="1" fill="#000000"/>
<rect x="439" y="57" width="1" height="1" fill="#000000"/>
<rect x="441" y="57" width="1" height="1" fill="#000000"/>
<rect x="443" y="57" width="1" height="1" fill="#000000"/>
<rect x="445" y="57" width="2" height="1" fill="#000000"/>
<rect x="436" y="58" width="2" height="1" fill="#000000"/>
<rect x="439" y="58" width="1" height="1" fill="#000000"/>
<rect x="441" y="58" width="1" height="1" fill="#000000"/>
<rect x="443" y="58" width="1" height="1" fill="#000000"/>
<rect x="445" y="58" width="1" height="1" fill="#000000"/>
<rect x="437" y="59" width="2" height="1" fill="#000000"/>
<rect x="440" y="59" width="1" height="1" fill="#000000"/>
<rect x="442" y="59" width="1" height="1" fill="#000000"/>
<rect x="444" y="59" width="2" height="1" fill="#000000"/>
<rect x="439" y="60" width="5" height="1" fill="#000000"/>
<rect x="457" y="53" width="3" height="1" fill="#000000"/>
<rect x="454" y="54" width="1" height="1" fill="#000000"/>
<rect x="457" y="54" width="2" height="1" fill="#000000"/>
<rect x="461" y="54" width="1" height="1" fill="#000000"/>
<rect x="453" y="55" width="1" height="1" fill="#000000"/>
<rect x="455" y="55" width="1" height="1" fill="#000000"/>
<rect x="457" y="55" width="1" height="1" fill="#000000"/>
<rect x="459" y="55" width="1" height="1" fill="#000000"/>
<rect x="461" y="55" width="2" height="1" fill="#000000"/>
<rect x="453" y="56" width="1" height="1" fill="#000000"/>
<rect x="456" y="56" width="4" height="1" fill="#000000"/>
<rect x="462" y="56" width="1" height="1" fill="#000000"/>
<rect x="453" y="57" width="1" height="1" fill="#000000"/>
<rect x="462" y="57" width="1" height="1" fill="#000000"/>
<rect x="453" y="58" width="1" height="1" fill="#000000"/>
<rect x="462" y="58" width="1" height="1" fill="#000000"/>
<rect x="453" y="59" width="3" height="1" fill="#000000"/>
<rect x="457" y="59" width="3" height="1" fill="#000000"/>
<rect x="461" y="59" width="2" height="1" fill="#000000"/>
<rect x="453" y="60" width="1" height="1" fill="#000000"/>
<rect x="463" y="60" width="1" height="1" fill="#000000"/>
<rect x="478" y="50" width="2" height="1" fill="#aca899"/>
<rect x="477" y="51" width="3" height="1" fill="#aca899"/>
<rect x="476" y="52" width="2" height="1" fill="#aca899"/>
<rect x="471" y="53" width="2" height="1" fill="#aca899"/>
<rect x="475" y="53" width="2" height="1" fill="#aca899"/>
<rect x="472" y="54" width="5" height="1" fill="#aca899"/>
<rect x="472" y="55" width="3" height="1" fill="#aca899"/>
<rect x="471" y="56" width="1" height="1" fill="#aca899"/>
<rect x="473" y="56" width="2" height="1" fill="#aca899"/>
<rect x="470" y="57" width="11" height="1" fill="#aca899"/>
<rect x="470" y="58" width="1" height="1" fill="#aca899"/>
<rect x="480" y="58" width="1" height="1" fill="#aca899"/>
<rect x="470" y="59" width="1" height="1" fill="#aca899"/>
<rect x="472" y="59" width="3" height="1" fill="#aca899"/>
<rect x="476" y="59" width="2" height="1" fill="#aca899"/>
<rect x="480" y="59" width="1" height="1" fill="#aca899"/>
<rect x="470" y="60" width="1" height="1" fill="#aca899"/>
<rect x="480" y="60" width="1" height="1" fill="#aca899"/>
<rect x="492" y="51" width="1" height="1" fill="#800000"/>
<rect x="492" y="52" width="1" height="1" fill="#800000"/>
<rect x="491" y="53" width="3" height="1" fill="#800000"/>
<rect x="491" y="54" width="3" height="1" fill="#800000"/>
<rect x="491" y="55" width="3" height="1" fill="#800000"/>
<rect x="492" y="56" width="1" height="1" fill="#800000"/>
<rect x="492" y="57" width="1" height="1" fill="#800000"/>
<rect x="492" y="58" width="1" height="1" fill="#800000"/>
<rect x="491" y="59" width="3" height="1" fill="#800000"/>
<rect x="490" y="60" width="5" height="1" fill="#800000"/>
<rect x="504" y="51" width="8" height="1" fill="#aca899"/>
<rect x="504" y="52" width="1" height="1" fill="#aca899"/>
<rect x="505" y="52" width="6" height="1" fill="#ffffff"/>
<rect x="511" y="52" width="1" height="1" fill="#aca899"/>
<rect x="504" y="53" width="1" height="1" fill="#aca899"/>
<rect x="505" y="53" width="2" height="1" fill="#000000"/>
<rect x="507" y="53" width="4" height="1" fill="#ffffff"/>
<rect x="511" y="53" width="1" height="1" fill="#aca899"/>
<rect x="504" y="54" width="1" height="1" fill="#aca899"/>
<rect x="505" y="54" width="1" height="1" fill="#ffffff"/>
<rect x="506" y="54" width="5" height="1" fill="#000000"/>
<rect x="511" y="54" width="1" height="1" fill="#aca899"/>
<rect x="504" y="55" width="1" height="1" fill="#aca899"/>
<rect x="505" y="55" width="6" height="1" fill="#ffffff"/>
<rect x="511" y="55" width="1" height="1" fill="#aca899"/>
<rect x="504" y="56" width="1" height="1" fill="#aca899"/>
<rect x="505" y="56" width="6" height="1" fill="#000000"/>
<rect x="511" y="56" width="1" height="1" fill="#aca899"/>
<rect x="504" y="57" width="1" height="1" fill="#aca899"/>
<rect x="505" y="57" width="6" height="1" fill="#000000"/>
<rect x="511" y="57" width="1" height="1" fill="#aca899"/>
<rect x="504" y="58" width="1" height="1" fill="#aca899"/>
<rect x="505" y="58" width="6" height="1" fill="#ffffff"/>
<rect x="511" y="58" width="1" height="1" fill="#aca899"/>
<rect x="512" y="58" width="4" height="1" fill="#000080"/>
<rect x="504" y="59" width="1" height="1" fill="#aca899"/>
<rect x="505" y="59" width="6" height="1" fill="#ffffff"/>
<rect x="511" y="59" width="1" height="1" fill="#aca899"/>
<rect x="513" y="59" width="2" height="1" fill="#000080"/>
<rect x="504" y="60" width="8" height="1" fill="#aca899"/>
<rect x="526" y="51" width="3" height="1" fill="#000000"/>
<rect x="524" y="52" width="2" height="1" fill="#000000"/>
<rect x="527" y="52" width="4" height="1" fill="#000000"/>
<rect x="524" y="53" width="1" height="1" fill="#000000"/>
<rect x="526" y="53" width="1" height="1" fill="#000000"/>
<rect x="528" y="53" width="1" height="1" fill="#000000"/>
<rect x="530" y="53" width="2" height="1" fill="#000000"/>
<rect x="523" y="54" width="2" height="1" fill="#000000"/>
<rect x="526" y="54" width="1" height="1" fill="#000000"/>
<rect x="528" y="54" width="1" height="1" fill="#000000"/>
<rect x="530" y="54" width="1" height="1" fill="#000000"/>
<rect x="532" y="54" width="1" height="1" fill="#000000"/>
<rect x="523" y="55" width="1" height="1" fill="#000000"/>
<rect x="526" y="55" width="1" height="1" fill="#000000"/>
<rect x="528" y="55" width="1" height="1" fill="#000000"/>
<rect x="530" y="55" width="1" height="1" fill="#000000"/>
<rect x="532" y="55" width="1" height="1" fill="#000000"/>
<rect x="522" y="56" width="2" height="1" fill="#000000"/>
<rect x="526" y="56" width="1" height="1" fill="#000000"/>
<rect x="530" y="56" width="1" height="1" fill="#000000"/>
<rect x="532" y="56" width="1" height="1" fill="#000000"/>
<rect x="522" y="57" width="1" height="1" fill="#000000"/>
<rect x="524" y="57" width="1" height="1" fill="#000000"/>
<rect x="532" y="57" width="1" height="1" fill="#000000"/>
<rect x="523" y="58" width="1" height="1" fill="#000000"/>
<rect x="532" y="58" width="1" height="1" fill="#000000"/>
<rect x="524" y="59" width="1" height="1" fill="#000000"/>
<rect x="531" y="59" width="1" height="1" fill="#000000"/>
<rect x="525" y="60" width="1" height="1" fill="#000000"/>
<rect x="531" y="60" width="1" height="1" fill="#000000"/>
<rect x="526" y="61" width="6" height="1" fill="#000000"/>
<rect x="5" y="85" width="9" height="1" fill="#000080"/>
<rect x="5" y="86" width="1" height="1" fill="#000000"/>
<rect x="6" y="86" width="7" height="1" fill="#ffffff"/>
<rect x="13" y="86" width="1" height="1" fill="#000000"/>
<rect x="5" y="87" width="3" height="1" fill="#000000"/>
<rect x="8" y="87" width="1" height="1" fill="#ffffff"/>
<rect x="9" y="87" width="2" height="1" fill="#000000"/>
<rect x="11" y="87" width="2" height="1" fill="#ffffff"/>
<rect x="13" y="87" width="1" height="1" fill="#000000"/>
<rect x="0" y="88" width="5" height="1" fill="#60a040"/>
<rect x="5" y="88" width="1" height="1" fill="#000000"/>
<rect x="6" y="88" width="4" height="1" fill="#ffffff"/>
<rect x="10" y="88" width="1" height="1" fill="#aca899"/>
<rect x="11" y="88" width="2" height="1" fill="#ffffff"/>
<rect x="13" y="88" width="1" height="1" fill="#000000"/>
<rect x="5" y="89" width="4" height="1" fill="#000000"/>
<rect x="9" y="89" width="4" height="1" fill="#ffffff"/>
<rect x="13" y="89" width="1" height="1" fill="#000000"/>
<rect x="5" y="90" width="1" height="1" fill="#000000"/>
<rect x="6" y="90" width="4" height="1" fill="#ffffff"/>
<rect x="10" y="90" width="1" height="1" fill="#aca899"/>
<rect x="11" y="90" width="2" height="1" fill="#ffffff"/>
<rect x="13" y="90" width="1" height="1" fill="#000000"/>
<rect x="5" y="91" width="4" height="1" fill="#000000"/>
<rect x="9" y="91" width="4" height="1" fill="#ffffff"/>
<rect x="13" y="91" width="1" height="1" fill="#000000"/>
<rect x="5" y="92" width="1" height="1" fill="#000000"/>
<rect x="6" y="92" width="7" height="1" fill="#ffffff"/>
<rect x="13" y="92" width="1" height="1" fill="#000000"/>
<rect x="4" y="93" width="10" height="1" fill="#000000"/>
<rect x="4" y="94" width="3" height="1" fill="#000000"/>
<rect x="45" y="427" width="7" height="1" fill="#000000"/>
<rect x="45" y="428" width="1" height="1" fill="#000000"/>
<rect x="46" y="428" width="5" height="1" fill="#ffffff"/>
<rect x="51" y="428" width="2" height="1" fill="#000000"/>
<rect x="45" y="429" width="1" height="1" fill="#000000"/>
<rect x="46" y="429" width="1" height="1" fill="#ffffff"/>
<rect x="47" y="429" width="3" height="1" fill="#000000"/>
<rect x="50" y="429" width="2" height="1" fill="#ffffff"/>
<rect x="52" y="429" width="1" height="1" fill="#000000"/>
<rect x="45" y="430" width="1" height="1" fill="#000000"/>
<rect x="46" y="430" width="6" height="1" fill="#ffffff"/>
<rect x="52" y="430" width="1" height="1" fill="#000000"/>
<rect x="45" y="431" width="1" height="1" fill="#000000"/>
<rect x="46" y="431" width="1" height="1" fill="#ffffff"/>
<rect x="47" y="431" width="4" height="1" fill="#000000"/>
<rect x="51" y="431" width="1" height="1" fill="#ffffff"/>
<rect x="52" y="431" width="1" height="1" fill="#000000"/>
<rect x="45" y="432" width="1" height="1" fill="#000000"/>
<rect x="46" y="432" width="6" height="1" fill="#ffffff"/>
<rect x="52" y="432" width="1" height="1" fill="#000000"/>
<rect x="45" y="433" width="1" height="1" fill="#000000"/>
<rect x="46" y="433" width="1" height="1" fill="#ffffff"/>
<rect x="47" y="433" width="4" height="1" fill="#000000"/>
<rect x="51" y="433" width="1" height="1" fill="#ffffff"/>
<rect x="52" y="433" width="1" height="1" fill="#000000"/>
<rect x="45" y="434" width="1" height="1" fill="#000000"/>
<rect x="46" y="434" width="6" height="1" fill="#ffffff"/>
<rect x="52" y="434" width="1" height="1" fill="#000000"/>
<rect x="45" y="435" width="1" height="1" fill="#000000"/>
<rect x="46" y="435" width="1" height="1" fill="#ffffff"/>
<rect x="47" y="435" width="4" height="1" fill="#000000"/>
<rect x="51" y="435" width="1" height="1" fill="#ffffff"/>
<rect x="52" y="435" width="1" height="1" fill="#000000"/>
<rect x="45" y="436" width="8" height="1" fill="#000000"/>
<rect x="486" y="190" width="10" height="1" fill="#000000"/>
<rect x="486" y="191" width="1" height="1" fill="#000000"/>
<rect x="487" y="191" width="2" height="1" fill="#ffffff"/>
<rect x="489" y="191" width="4" height="1" fill="#000000"/>
<rect x="493" y="191" width="1" height="1" fill="#ffffff"/>
<rect x="494" y="191" width="2" height="1" fill="#000000"/>
<rect x="486" y="192" width="2" height="1" fill="#000000"/>
<rect x="488" y="192" width="1" height="1" fill="#ffffff"/>
<rect x="489" y="192" width="3" height="1" fill="#000000"/>
<rect x="492" y="192" width="1" height="1" fill="#ffffff"/>
<rect x="493" y="192" width="3" height="1" fill="#000000"/>
<rect x="486" y="193" width="1" height="1" fill="#000000"/>
<rect x="487" y="193" width="2" height="1" fill="#ffffff"/>
<rect x="489" y="193" width="2" height="1" fill="#000000"/>
<rect x="491" y="193" width="1" height="1" fill="#ffffff"/>
<rect x="492" y="193" width="4" height="1" fill="#000000"/>
<rect x="486" y="194" width="10" height="1" fill="#000000"/>
<rect x="486" y="195" width="10" height="1" fill="#000000"/>
<rect x="138" y="433" width="1" height="1" fill="#000000"/>
<rect x="137" y="434" width="2" height="1" fill="#000000"/>
<rect x="136" y="435" width="3" height="1" fill="#000000"/>
<rect x="136" y="436" width="3" height="1" fill="#000000"/>
<rect x="137" y="437" width="2" height="1" fill="#000000"/>
<rect x="138" y="438" width="1" height="1" fill="#000000"/>
<rect x="489" y="415" width="1" height="1" fill="#000000"/>
<rect x="488" y="416" width="2" height="1" fill="#000000"/>
<rect x="487" y="417" width="3" height="1" fill="#000000"/>
<rect x="487" y="418" width="3" height="1" fill="#000000"/>
<rect x="488" y="419" width="2" height="1" fill="#000000"/>
<rect x="489" y="420" width="1" height="1" fill="#000000"/>
<rect x="363" y="509" width="1" height="1" fill="#000000"/>
<rect x="362" y="510" width="2" height="1" fill="#000000"/>
<rect x="361" y="511" width="3" height="1" fill="#000000"/>
<rect x="362" y="512" width="2" height="1" fill="#000000"/>
<rect x="363" y="513" width="1" height="1" fill="#000000"/>
<rect x="7" y="509" width="1" height="1" fill="#aca899"/>
<rect x="7" y="510" width="2" height="1" fill="#aca899"/>
<rect x="7" y="511" width="3" height="1" fill="#aca899"/>
<rect x="7" y="512" width="2" height="1" fill="#aca899"/>
<rect x="7" y="513" width="1" height="1" fill="#aca899"/>
<rect x="718" y="509" width="2" height="1" fill="#000000"/>
<rect x="718" y="510" width="2" height="1" fill="#000000"/>
<rect x="718" y="511" width="2" height="1" fill="#000000"/>
<rect x="718" y="512" width="2" height="1" fill="#000000"/>
<rect x="718" y="513" width="2" height="1" fill="#000000"/>
<rect x="102" y="73" width="1" height="1" fill="#aca899"/>
<rect x="101" y="74" width="3" height="1" fill="#aca899"/>
<rect x="100" y="75" width="5" height="1" fill="#aca899"/>
<rect x="111" y="74" width="1" height="1" fill="#000000"/>
<rect x="113" y="74" width="1" height="1" fill="#000000"/>
<rect x="112" y="75" width="1" height="1" fill="#000000"/>
<rect x="111" y="76" width="1" height="1" fill="#000000"/>
<rect x="113" y="76" width="1" height="1" fill="#000000"/>
</svg>
<!--/ICONS-->
<!--CONTENT-->
</body></html>
